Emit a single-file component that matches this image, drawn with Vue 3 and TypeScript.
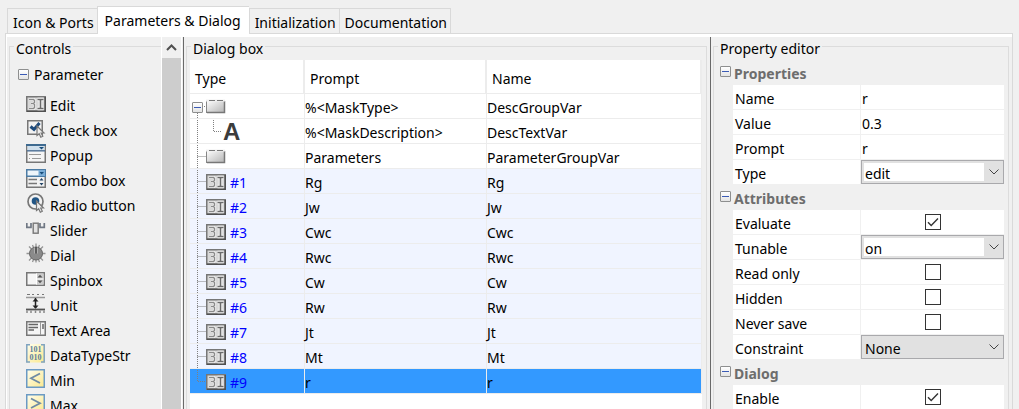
<script setup lang="ts">
import { ref } from 'vue'

interface Row {
  kind: 'group' | 'text' | 'edit'
  tag?: string
  prompt: string
  name: string
}
interface Property {
  id: string
  label: string
  type: 'text' | 'combo' | 'list' | 'check'
  value: string | boolean
}
interface Section {
  title: string
  items: Property[]
}

const tabs = ['Icon & Ports', 'Parameters & Dialog', 'Initialization', 'Documentation']
const activeTab = ref('Parameters & Dialog')

const controls = [
  'Edit', 'Check box', 'Popup', 'Combo box', 'Radio button', 'Slider', 'Dial',
  'Spinbox', 'Unit', 'Text Area', 'DataTypeStr', 'Min', 'Max',
]

const variables = ['Rg', 'Jw', 'Cwc', 'Rwc', 'Cw', 'Rw', 'Jt', 'Mt', 'r']
const rows: Row[] = [
  { kind: 'group', prompt: '%<MaskType>', name: 'DescGroupVar' },
  { kind: 'text', prompt: '%<MaskDescription>', name: 'DescTextVar' },
  { kind: 'group', prompt: 'Parameters', name: 'ParameterGroupVar' },
  ...variables.map((v, i): Row => ({ kind: 'edit', tag: `#${i + 1}`, prompt: v, name: v })),
]
const selected = ref(rows.length - 1)

const sections = ref<Section[]>([
  {
    title: 'Properties',
    items: [
      { id: 'name', label: 'Name', type: 'text', value: 'r' },
      { id: 'value', label: 'Value', type: 'text', value: '0.3' },
      { id: 'prompt', label: 'Prompt', type: 'text', value: 'r' },
      { id: 'type', label: 'Type', type: 'combo', value: 'edit' },
    ],
  },
  {
    title: 'Attributes',
    items: [
      { id: 'evaluate', label: 'Evaluate', type: 'check', value: true },
      { id: 'tunable', label: 'Tunable', type: 'combo', value: 'on' },
      { id: 'readonly', label: 'Read only', type: 'check', value: false },
      { id: 'hidden', label: 'Hidden', type: 'check', value: false },
      { id: 'neversave', label: 'Never save', type: 'check', value: false },
      { id: 'constraint', label: 'Constraint', type: 'list', value: 'None' },
    ],
  },
  {
    title: 'Dialog',
    items: [{ id: 'enable', label: 'Enable', type: 'check', value: true }],
  },
])
</script>

<template>
  <div class="editor">
    <svg class="defs" width="0" height="0" aria-hidden="true">
      <defs>
        <linearGradient id="steel" x1="0" y1="0" x2="1" y2="1">
          <stop offset="0" stop-color="#fff" />
          <stop offset="1" stop-color="#b4b4b4" />
        </linearGradient>
        <linearGradient id="lemon" x1="0" y1="0" x2="1" y2="1">
          <stop offset="0" stop-color="#fffef0" />
          <stop offset="1" stop-color="#fbe88c" />
        </linearGradient>
        <symbol id="icon-edit" viewBox="0 0 20 20">
          <rect x="0.75" y="3.75" width="18.5" height="14.5" fill="#d8d8d8" stroke="#777" stroke-width="1.5" />
          <path d="M1 18.2H19.2V4" fill="none" stroke="#505050" stroke-width="1.5" />
          <path d="M3 6.5H7.5L8.5 7.5V9.5L7.5 10.5H5M7.5 10.5L8.5 11.5V14.5L7.5 15.5H3" fill="none" stroke="#f8f8f8" stroke-width="3" />
          <path d="M3 6.5H7.5L8.5 7.5V9.5L7.5 10.5H5M7.5 10.5L8.5 11.5V14.5L7.5 15.5H3" fill="none" stroke="#8a8a8a" stroke-width="1.5" />
          <path d="M11.5 6.5H17.5M11.5 15.5H17.5M14.5 6.5V15.5" fill="none" stroke="#f8f8f8" stroke-width="3.5" />
          <path d="M11.5 6.5H17.5M11.5 15.5H17.5M14.5 6.5V15.5" fill="none" stroke="#6a6a6a" stroke-width="1.6" />
        </symbol>
        <symbol id="icon-group" viewBox="0 0 20 20">
          <rect x="0.5" y="4.5" width="18" height="12" fill="url(#steel)" stroke="#868686" />
          <path d="M1 16.5H18.5V5" fill="none" stroke="#777" stroke-width="1.5" />
          <path d="M0 4.5H19" stroke="#f0f0f0" stroke-width="2" />
          <path d="M3 4.5H9M11 4.5H17" stroke="#777" />
        </symbol>
        <symbol id="icon-check-box" viewBox="0 0 20 20">
          <rect x="1.75" y="2.75" width="14.5" height="13.5" fill="#f2f2f2" stroke="#777" stroke-width="1.5" />
          <path d="M4.5 8.5L8 11.5L13.5 5" fill="none" stroke="#1d4a7c" stroke-width="3" />
          <path d="M11 8V17.5L13.2 15.8L14.8 19.2L16.8 18.2L15.2 15H18Z" fill="#eee" stroke="#777" stroke-width="1.2" />
        </symbol>
        <symbol id="icon-popup" viewBox="0 0 20 20">
          <rect x="0.75" y="1.75" width="18.5" height="17.5" fill="#f5f5f5" stroke="#777" stroke-width="1.5" />
          <path d="M0 2H20" stroke="#3e6a90" stroke-width="2" />
          <rect x="1.5" y="3" width="17" height="4" fill="#cfdfec" />
          <path d="M13 4H18L15.5 6.5Z" fill="#174c7a" />
          <path d="M1 7.8H19" stroke="#56779a" stroke-width="1.5" />
          <path d="M3 11.5H15M6 15.5H15M3 15.5H4" stroke="#999" />
        </symbol>
        <symbol id="icon-combo-box" viewBox="0 0 20 20">
          <rect x="0.75" y="1.75" width="18.5" height="17.5" fill="#f2f2f2" stroke="#777" stroke-width="1.5" />
          <rect x="0.75" y="1.75" width="18.5" height="6.5" fill="#eef5fa" stroke="#4c7ca5" stroke-width="1.5" />
          <rect x="12.5" y="2" width="6.5" height="6" fill="#79acd6" />
          <path d="M13.5 4H18L15.7 6.5Z" fill="#174c7a" />
          <path d="M2.5 11.5H11M2.5 15.5H11" stroke="#777" stroke-width="1.5" />
          <path d="M13.5 12.5L15.5 10L17.5 12.5ZM13.5 15L15.5 17.5L17.5 15Z" fill="#246" />
        </symbol>
        <symbol id="icon-radio-button" viewBox="0 0 20 20">
          <circle cx="9.5" cy="8.5" r="7.5" fill="#f3f3f3" stroke="#777" stroke-width="1.7" />
          <circle cx="9.5" cy="8" r="3.8" fill="#215585" />
          <path d="M10.5 8V17.5L12.7 15.8L14.3 19.2L16.3 18.2L14.7 15H17.5Z" fill="#eee" stroke="#777" stroke-width="1.2" />
        </symbol>
        <symbol id="icon-slider" viewBox="0 0 20 20">
          <path d="M0.8 5V9.3H5.8M5 5V9.3M14 5V9.3H18.3V5" fill="none" stroke="#707884" stroke-width="1.7" />
          <rect x="7.2" y="5.2" width="5" height="10" fill="#e3e3e3" stroke="#777" stroke-width="1.4" />
        </symbol>
        <symbol id="icon-dial" viewBox="0 0 20 20">
          <path d="M10 0.5V19.5M0.5 10.5H19.5M3 3.5L17 17.5M17 3.5L3 17.5M6.5 2L13.5 19M13.5 2L6.5 19" stroke="#949494" stroke-width="1.3" />
          <circle cx="10" cy="10.5" r="6.5" fill="#8a8a8a" stroke="#666" />
          <path d="M8.5 4.5V10.5M11.5 4.5V10.5" stroke="#b0b0b0" />
          <path d="M10 4V10.5" stroke="#4c4c4c" stroke-width="1.5" />
        </symbol>
        <symbol id="icon-spinbox" viewBox="0 0 20 20">
          <rect x="0.75" y="4.75" width="17.5" height="12.5" fill="#f5f5f5" stroke="#777" stroke-width="1.5" />
          <rect x="10" y="5.5" width="7.5" height="11" fill="#ccc" />
          <path d="M10.5 5.5V16.5M10.5 11H17.5" stroke="#fff" />
          <path d="M11.5 9.5L14 6.8L16.5 9.5ZM11.5 12.5L14 15.2L16.5 12.5Z" fill="#555" />
        </symbol>
        <symbol id="icon-unit" viewBox="0 0 20 20">
          <path d="M1 1.5H4M6 1.5H8M11 1.5H13M16 1.5H18" stroke="#777" />
          <path d="M0 4.5H19" stroke="#999" stroke-width="1.5" />
          <path d="M0 16.5H19" stroke="#555" stroke-width="1.8" />
          <path d="M1 17.5V20M5 17.5V20M9.5 17.5V20M14 17.5V20M18 17.5V20" stroke="#888" stroke-width="1.5" />
          <path d="M9.5 5V15" stroke="#222" stroke-width="1.5" />
          <path d="M6.5 8.5L9.5 5.2L12.5 8.5ZM6.5 12.5L9.5 15.8L12.5 12.5Z" fill="#222" />
        </symbol>
        <symbol id="icon-text-area" viewBox="0 0 20 20">
          <rect x="0.75" y="3.75" width="18.5" height="13.5" fill="#f5f5f5" stroke="#777" stroke-width="1.5" />
          <path d="M2.5 6.5H12M2.5 9.5H12M2.5 12H8" stroke="#666" stroke-width="1.3" />
          <path d="M14.5 4V17" stroke="#999" />
          <path d="M17 6V11" stroke="#666" stroke-width="1.5" />
        </symbol>
        <symbol id="icon-datatypestr" viewBox="0 0 20 20">
          <rect x="0" y="1" width="19" height="18.5" fill="url(#lemon)" />
          <path d="M4 1.8H0.8V19H4M15 1.8H18.2V19H15" fill="none" stroke="#7fa3c0" stroke-width="1.5" />
          <text x="9.5" y="8.5" class="bits">101</text>
          <text x="9.5" y="17" class="bits">010</text>
        </symbol>
        <symbol id="icon-min" viewBox="0 0 20 20">
          <rect x="0.75" y="1.75" width="17.5" height="17.5" fill="url(#lemon)" stroke="#6b9ac4" stroke-width="1.5" />
          <path d="M14 5.5L5 10.3L14 15" fill="none" stroke="#6f8ba5" stroke-width="1.8" />
        </symbol>
        <symbol id="icon-max" viewBox="0 0 20 20">
          <rect x="0.75" y="1.75" width="17.5" height="17.5" fill="url(#lemon)" stroke="#6b9ac4" stroke-width="1.5" />
          <path d="M5 5.5L14 10.3L5 15" fill="none" stroke="#6f8ba5" stroke-width="1.8" />
        </symbol>
      </defs>
    </svg>

    <nav class="tabs" role="tablist">
      <button
        v-for="tab in tabs"
        :key="tab"
        type="button"
        role="tab"
        class="tab"
        :class="{ active: tab === activeTab }"
        :aria-selected="tab === activeTab"
        @click="activeTab = tab"
      >{{ tab }}</button>
    </nav>

    <main class="panel">
      <div class="pane controls-pane">
        <fieldset class="box controls-box">
          <legend>Controls</legend>
          <div class="category">
            <button type="button" class="toggle" aria-label="Collapse Parameter"></button>
            <span>Parameter</span>
          </div>
          <ul class="controls">
            <li v-for="item in controls" :key="item">
              <svg class="icon" aria-hidden="true"><use :href="'#icon-' + item.toLowerCase().replace(' ', '-')" /></svg>
              <span>{{ item }}</span>
            </li>
          </ul>
        </fieldset>
        <div class="scrollbar">
          <button type="button" class="scroll-up" aria-label="Scroll up">
            <svg width="11" height="7" viewBox="0 0 11 7"><path d="M1 6L5.5 1.5L10 6" fill="none" stroke="#505050" stroke-width="2" /></svg>
          </button>
          <div class="thumb"></div>
        </div>
      </div>

      <div class="pane split">
        <fieldset class="box dialog-box">
          <legend>Dialog box</legend>
          <div class="sheet">
            <table>
              <colgroup><col class="col-type" /><col class="col-prompt" /><col /></colgroup>
              <thead>
                <tr><th>Type</th><th>Prompt</th><th>Name</th></tr>
              </thead>
              <tbody>
                <tr
                  v-for="(row, i) in rows"
                  :key="i"
                  :class="[row.kind, { selected: i === selected }]"
                  @click="selected = i"
                >
                  <td>
                    <div class="node">
                      <svg class="branch" :class="{ deep: row.kind === 'text' }" aria-hidden="true">
                        <path v-if="i === 0" d="M7.5 19V25M12 12.5H16" />
                        <path v-else-if="row.kind === 'text'" d="M7.5 1V25M23.5 1V12.5H32" />
                        <path v-else-if="i === rows.length - 1" d="M7.5 1V12.5H16" />
                        <path v-else d="M7.5 1V25M7.5 12.5H16" />
                      </svg>
                      <button v-if="i === 0" type="button" class="toggle root" aria-label="Collapse group"></button>
                      <span v-if="row.kind === 'text'" class="letter">A</span>
                      <svg v-else class="icon" aria-hidden="true"><use :href="'#icon-' + row.kind" /></svg>
                      <span v-if="row.tag" class="tag">{{ row.tag }}</span>
                    </div>
                  </td>
                  <td>{{ row.prompt }}</td>
                  <td>{{ row.name }}</td>
                </tr>
              </tbody>
            </table>
          </div>
        </fieldset>
      </div>

      <div class="pane split">
        <fieldset class="box property-box">
          <legend>Property editor</legend>
          <section v-for="section in sections" :key="section.title">
            <h2>
              <button type="button" class="toggle" :aria-label="'Collapse ' + section.title"></button>
              <span>{{ section.title }}</span>
            </h2>
            <div v-for="item in section.items" :key="item.id" class="property">
              <label :for="item.id">{{ item.label }}</label>
              <div class="value">
                <input v-if="item.type === 'text'" :id="item.id" v-model="item.value" type="text" />
                <input v-else-if="item.type === 'check'" :id="item.id" v-model="item.value" type="checkbox" />
                <span v-else class="select" :class="item.type">
                  <select :id="item.id" v-model="item.value">
                    <option>{{ item.value }}</option>
                  </select>
                  <svg class="chevron" viewBox="0 0 10 6" aria-hidden="true"><path d="M0.5 0.5L5 5L9.5 0.5" /></svg>
                </span>
              </div>
            </div>
          </section>
        </fieldset>
      </div>
    </main>
  </div>
</template>

<style>
body { margin: 0; background: #f0f0f0; }
</style>

<style scoped>
* { box-sizing: border-box; }
.editor {
  display: flex;
  flex-direction: column;
  height: 100vh;
  overflow: hidden;
  padding: 6px 6px 0 5px;
  background: #f0f0f0;
  color: #000;
  font: 14px/24px "Noto Sans", "Open Sans", sans-serif;
}
.defs { position: absolute; }
button, input, select { font: inherit; color: inherit; margin: 0; padding: 0; }
.bits { font: bold 8px "Liberation Serif", serif; fill: #5c7f9d; text-anchor: middle; }

.tabs { display: flex; align-items: flex-end; height: 27px; flex: none; padding-left: 2px; }
.tab {
  height: 25px;
  padding: 4px 3px 0 5px;
  border: 1px solid #d9d9d9;
  border-bottom: 0;
  border-right-width: 0;
  background: #f0f0f0;
  line-height: 20px;
  white-space: nowrap;
}
.tab:last-child { border-right-width: 1px; }
.tab.active { height: 28px; margin-bottom: -1px; padding: 0 8px 0 7px; background: #fff; z-index: 1; }

.panel {
  flex: 1;
  min-height: 0;
  display: grid;
  grid-template-columns: 176px minmax(0, 1fr) 302px;
  border: 1px solid #d9d9d9;
  border-bottom: 0;
  box-shadow: inset 1px 3px #fff;
  padding: 3px 0 0 1px;
}
.pane { display: flex; min-width: 0; min-height: 0; }
.split { border-left: 1px solid #696969; padding: 0 3px 0 2px; }

.box {
  flex: 1;
  min-width: 0;
  margin: 0;
  padding: 0;
  border: 1px solid #dcdcdc;
  border-bottom: 0;
}
legend { height: 18px; margin-left: 4px; padding: 0 2px; line-height: 24px; white-space: nowrap; }

.toggle {
  flex: none;
  width: 11px;
  height: 11px;
  border: 1px solid #8e8f8f;
  border-radius: 1px;
  background:
    linear-gradient(#3b5bb5, #3b5bb5) center / 7px 1px no-repeat,
    linear-gradient(#fff, #e4e4e4);
}

.controls-pane { padding-left: 2px; }
.controls-box { border-right: 0; }
.category { display: flex; align-items: center; gap: 5px; height: 24px; margin-top: 7px; padding-left: 8px; }
.category span { padding-top: 2px; }
.controls { list-style: none; margin: 5px 0 0; padding: 0 0 0 16px; }
.controls li { display: flex; align-items: center; gap: 4px; height: 25px; white-space: nowrap; }
.controls span { padding-top: 4px; }
.icon { flex: none; width: 20px; height: 20px; }
.controls .icon { margin-bottom: 2px; }
.scrollbar { flex: none; display: flex; flex-direction: column; width: 21px; border: 0 solid #fff; border-width: 0 1px; margin-right: 1px; }
.scroll-up { display: flex; align-items: center; justify-content: center; height: 21px; border: 0; background: #f0f0f0; }
.thumb { flex: 1; background: #cdcdcd; }

.dialog-box, .property-box { padding: 0 4px 0 3px; }
.split legend { margin-left: 1px; }
.sheet { height: 100vh; margin-top: 5px; background: #fff; }
table { width: 100%; table-layout: fixed; border-collapse: separate; border-spacing: 0; }
.col-type { width: 115px; }
.col-prompt { width: 182px; }
th, td {
  border: 0 solid #ececec;
  border-width: 0 1px 1px 0;
  white-space: nowrap;
  text-align: left;
}
th { height: 34px; padding: 5px 0 0 5px; font-weight: normal; border-right-width: 2px; }
td { height: 25px; padding: 4px 0 0; line-height: 20px; }
td:first-child { padding: 0; }
.edit { background: #f0f4ff; }
.selected { background: #3399ff; }
.node { position: relative; display: flex; align-items: center; height: 24px; }
.branch { flex: none; width: 16px; height: 24px; fill: none; stroke: #808080; stroke-dasharray: 1 1; }
.branch.deep { width: 33px; }
.root { position: absolute; left: 2px; top: 8px; }
.tag { padding: 4px 0 0 4px; color: #00f; }
.letter { padding-top: 2px; color: #3c3c3c; font: bold 24px/24px "Liberation Sans", sans-serif; }

h2 { display: flex; align-items: center; gap: 3px; height: 25px; margin: 0; padding-left: 3px; font-size: 14px; color: #6d6d6d; }
h2 .toggle { margin-bottom: 2px; }
h2 span { padding-top: 2px; }
section:first-of-type { margin-top: 5px; }
.property { display: grid; grid-template-columns: 127px minmax(0, 1fr); gap: 1px; height: 25px; padding: 0 0 1px 16px; }
.property label { height: 24px; padding: 4px 0 0 2px; background: #fff; line-height: 20px; }
.value { display: flex; align-items: center; justify-content: center; background: #fff; min-width: 0; }
.value input[type='text'] { width: 100%; height: 24px; padding: 4px 0 0 1px; border: 0; background: transparent; outline: 0; }
.value input[type='checkbox'] { appearance: none; width: 16px; height: 16px; border: 1px solid #333; background: #fff; }
.value input[type='checkbox']:checked {
  background: url("data:image/svg+xml,%3Csvg xmlns='http://www.w3.org/2000/svg' viewBox='0 0 14 14'%3E%3Cpath d='M2 7.2L5.2 10.4L12 3.6' fill='none' stroke='%23333' stroke-width='1.4'/%3E%3C/svg%3E") center / 14px 14px no-repeat;
}
.select { display: flex; align-items: center; width: 100%; height: 24px; border: 1px solid #a9a9ac; background: #e1e1e1; padding: 2px 4px 2px 2px; }
.select select { flex: 1; min-width: 0; height: 18px; padding: 2px 0 0 1px; border: 0; appearance: none; background: transparent; line-height: 18px; outline: 0; }
.combo select { background: #fff; }
.chevron { flex: none; width: 10px; height: 6px; margin-left: 5px; fill: none; stroke: #444; }
</style>
